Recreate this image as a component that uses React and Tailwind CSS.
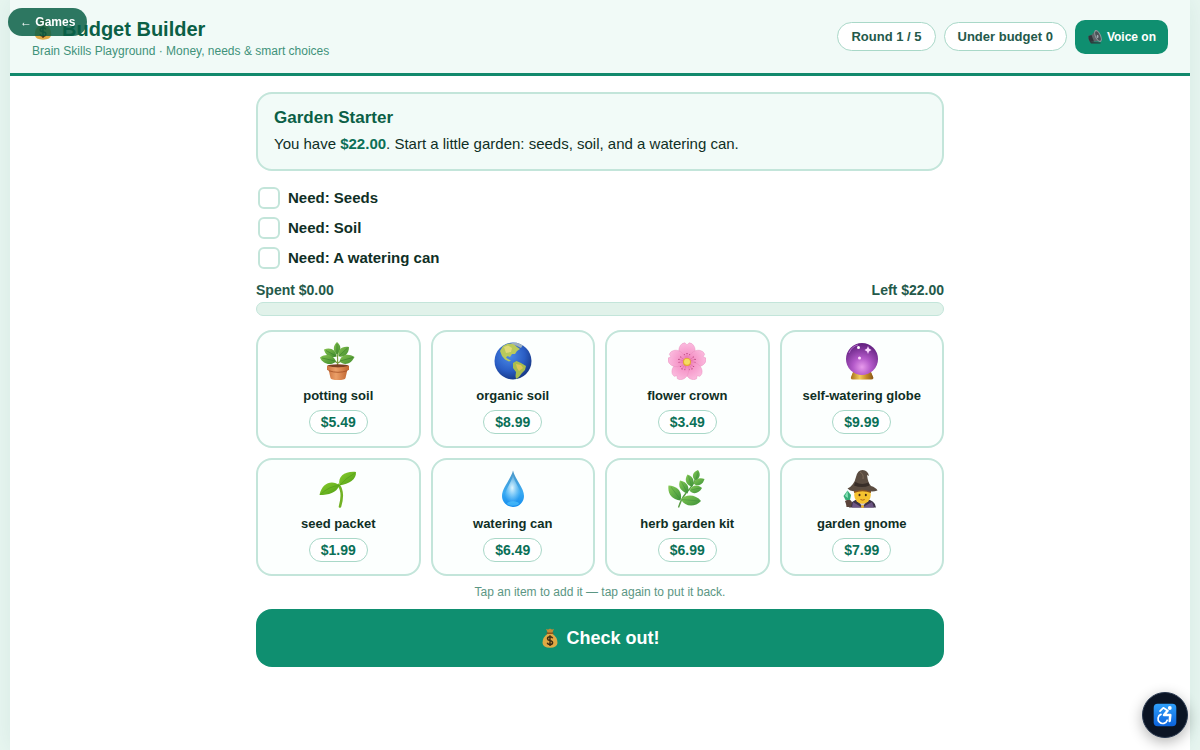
import React, { useState } from "react";

const BUDGET = 22;

const NEEDS = [
  { id: "seeds", label: "Seeds", items: ["seed"] },
  { id: "soil", label: "Soil", items: ["potting", "organic"] },
  { id: "can", label: "A watering can", items: ["can"] },
];

const ITEMS = [
  { id: "potting", name: "potting soil", price: 5.49, Icon: PlantIcon },
  { id: "organic", name: "organic soil", price: 8.99, Icon: GlobeIcon },
  { id: "crown", name: "flower crown", price: 3.49, Icon: BlossomIcon },
  { id: "orb", name: "self-watering globe", price: 9.99, Icon: OrbIcon },
  { id: "seed", name: "seed packet", price: 1.99, Icon: SproutIcon },
  { id: "can", name: "watering can", price: 6.49, Icon: DropIcon },
  { id: "herb", name: "herb garden kit", price: 6.99, Icon: HerbIcon },
  { id: "gnome", name: "garden gnome", price: 7.99, Icon: MageIcon },
];

const money = (n) => `$${n.toFixed(2)}`;

function PlantIcon() {
  return (
    <svg viewBox="0 0 38 38" className="size-[38px]" aria-hidden="true">
      <defs>
        <linearGradient id="pot" x1="0" x2="1">
          <stop offset="0" stopColor="#cc7440" />
          <stop offset=".4" stopColor="#eb9f68" />
          <stop offset="1" stopColor="#c0652f" />
        </linearGradient>
        <linearGradient id="leafA" x1="0" y1="0" x2="1" y2="1">
          <stop offset="0" stopColor="#86c250" />
          <stop offset="1" stopColor="#3f8c2d" />
        </linearGradient>
      </defs>
      <path d="M18.500 24 C19 18 18.500 13 18 9 M18.500 21 C15 18 12 17 10 16.500 M19 21 C22 19 25 17 27 16" fill="none" stroke="#7a9a3e" strokeWidth="1.200" />
      <g fill="url(#leafA)">
        <path d="M18 12.500 C13.500 9 14 3.500 18 0 C22.500 3.500 22.500 9 18 12.500Z" />
        <path d="M17.500 14.500 C11 16.500 6 13 5 7.500 C11.500 5 17 8 17.500 14.500Z" />
        <path d="M19.500 14.500 C18 8 23 3.500 30 5 C30 11.500 26 15.500 19.500 14.500Z" />
        <path d="M17 19.500 C11 24.500 3.500 21.500 1 15.500 C7.500 11 14.500 13 17 19.500Z" />
        <path d="M20.500 19.500 C22 12.500 29 11 35.500 15 C32 22 25.500 24 20.500 19.500Z" />
      </g>
      <path d="M17 14 L7 8.500 M20 14 L28.500 6 M16 19 L3 16 M21 19 L34 15.500 M18 12 V2" stroke="#2f7525" strokeWidth=".5" />
      <path d="M9 25 H29 L26.500 36 Q26 38 19 38 Q12 38 11.500 36Z" fill="url(#pot)" />
      <ellipse cx="19" cy="24" rx="10.800" ry="1.800" fill="#7b4023" />
      <path d="M8 23.800 Q19 27.200 30 23.800 V28 Q19 31.500 8 28Z" fill="url(#pot)" />
      <path d="M9.500 28.600 Q19 32 28.500 28.600" fill="none" stroke="#a34f24" strokeWidth=".8" />
    </svg>
  );
}

function GlobeIcon() {
  return (
    <svg viewBox="0 0 38 38" className="size-[38px]" aria-hidden="true">
      <defs>
        <radialGradient id="sea" cx=".4" cy=".35" r=".7">
          <stop offset="0" stopColor="#4c8ce8" />
          <stop offset=".6" stopColor="#2a5dc4" />
          <stop offset="1" stopColor="#15347f" />
        </radialGradient>
        <clipPath id="world">
          <circle cx="19" cy="19" r="18.500" />
        </clipPath>
      </defs>
      <circle cx="19" cy="19" r="18.500" fill="url(#sea)" />
      <g clipPath="url(#world)">
        <path d="M6 9 L9 4 L14 1.500 L20 2 L23 5 L26 7 L23 9 L21 12 L18 12 L16 15 L13.500 14 L12 15.500 L14 17 L17 18.500 L15 19.500 L11 17.500 L8 14Z" fill="#b9c95b" />
        <path d="M10 5 L14 3.500 L18 6 L17 10 L12 11Z" fill="#dfda78" />
        <path d="M16 1 L25 0 L29 3 L27 6 L23 4Z" fill="#9fb0bd" />
        <path d="M19 21 L22.500 19 L27 21 L32 24 L31 28 L28 31 L25 35 L22 37 L21.500 34 L22 30 L19 26Z" fill="#a9bd4f" />
        <path d="M22 22 L27 23 L29 26 L25 29 L23 26Z" fill="#dfc757" />
      </g>
    </svg>
  );
}

function BlossomIcon() {
  return (
    <svg viewBox="0 0 38 38" className="size-[38px]" aria-hidden="true">
      <defs>
        <radialGradient id="petal" gradientUnits="userSpaceOnUse" cx="19" cy="20" r="19">
          <stop offset="0" stopColor="#e86daa" />
          <stop offset=".4" stopColor="#f596c8" />
          <stop offset="1" stopColor="#fbbade" />
        </radialGradient>
      </defs>
      {[0, 72, 144, 216, 288].map((angle) => (
        <g key={angle} transform={`rotate(${angle} 19 20)`}>
          <path d="M19 20 C12 16 9 9 12 4 Q13.500 1 17 .8 L19 3 L21 .8 Q24.500 1 26 4 C29 9 26 16 19 20Z" fill="url(#petal)" stroke="#e78aba" strokeWidth=".4" />
          <path d="M19 18 V12 M18 17 L16.500 13 M20 17 L21.500 13" stroke="#d65b9b" strokeWidth=".4" />
          <circle cx="19" cy="11.500" r=".6" fill="#a62a62" />
          <circle cx="16.200" cy="12.500" r=".5" fill="#a62a62" />
          <circle cx="21.800" cy="12.500" r=".5" fill="#a62a62" />
        </g>
      ))}
      <circle cx="19" cy="20" r="4" fill="#e6a92f" />
      <circle cx="19" cy="19.700" r="3" fill="#f5dc62" />
    </svg>
  );
}

function OrbIcon() {
  return (
    <svg viewBox="0 0 38 38" className="size-[38px]" aria-hidden="true">
      <defs>
        <radialGradient id="orb" cx=".5" cy=".75" r=".7">
          <stop offset="0" stopColor="#e79aec" />
          <stop offset=".4" stopColor="#b359c9" />
          <stop offset="1" stopColor="#662383" />
        </radialGradient>
        <linearGradient id="gold" x1="0" x2="1">
          <stop offset="0" stopColor="#a8701b" />
          <stop offset=".4" stopColor="#f1cc5b" />
          <stop offset=".7" stopColor="#c58c28" />
          <stop offset="1" stopColor="#8c5916" />
        </linearGradient>
      </defs>
      <path d="M10 30 H28 L30.500 36 Q30 37.500 28 37.500 H10 Q8 37.500 7.800 36Z" fill="url(#gold)" />
      <circle cx="19" cy="17" r="16" fill="url(#orb)" />
      <path d="M9.500 31.500 Q19 35 28.500 31.500 L30 36 Q19 38.500 8 36Z" fill="url(#gold)" />
      <path d="M25 4 L26 6.500 L28.500 8 L26 9.500 L25 12 L24 9.500 L21.500 8 L24 6.500Z" fill="#fbd8ff" />
      <circle cx="15.500" cy="5.500" r="1.500" fill="#fff" />
      <circle cx="16.500" cy="16" r="1.500" fill="#ffd9ff" />
      <path d="M6 11 Q9 4 15 3" fill="none" stroke="#c57cd8" strokeWidth=".8" />
    </svg>
  );
}

function SproutIcon() {
  return (
    <svg viewBox="0 0 38 38" className="size-[38px]" aria-hidden="true">
      <defs>
        <linearGradient id="sprout" x1="0" y1="0" x2="1" y2="1">
          <stop offset="0" stopColor="#8ccf2e" />
          <stop offset="1" stopColor="#4c9c14" />
        </linearGradient>
      </defs>
      <path d="M19.500 15 C23.500 20 23.500 28 21 36.500" fill="none" stroke="#72b224" strokeWidth="2.600" strokeLinecap="round" />
      <path d="M20.500 15.500 C18.500 6 26 1 37 2 C37.500 9.500 30 14 20.500 15.500Z" fill="url(#sprout)" />
      <path d="M20.500 15.500 C14 9.500 3 12 .5 25 C10 25 17 23 20.500 15.500Z" fill="url(#sprout)" />
      <path d="M20.500 15.500 Q27 8 36 3 M20.500 15.500 Q10 16 1.500 24.500" fill="none" stroke="#4b9318" strokeWidth=".5" />
    </svg>
  );
}

function DropIcon() {
  return (
    <svg viewBox="0 0 38 38" className="size-[38px]" aria-hidden="true">
      <defs>
        <linearGradient id="drop" x1="0" y1="0" x2="0" y2="1">
          <stop offset="0" stopColor="#4d96c4" />
          <stop offset=".6" stopColor="#39aaf2" />
          <stop offset="1" stopColor="#128bed" />
        </linearGradient>
        <radialGradient id="dropLight" cx=".45" cy=".45" r=".55">
          <stop offset="0" stopColor="#dff6ff" />
          <stop offset="1" stopColor="#9bdcff" stopOpacity="0" />
        </radialGradient>
      </defs>
      <path d="M19 .5 C21 9 30 18 30 26 A11 11 0 0 1 8 26 C8 18 17 9 19 .5Z" fill="url(#drop)" />
      <path d="M19 5 C20 12 27 19 27 25.500 A8 8 0 0 1 11 25.500 C11 19 18 12 19 5Z" fill="url(#dropLight)" />
      <ellipse cx="19" cy="33.500" rx="6" ry="2.200" fill="#62d2ff" opacity=".5" />
    </svg>
  );
}

function HerbIcon() {
  return (
    <svg viewBox="0 0 38 38" className="size-[38px]" aria-hidden="true">
      <defs>
        <linearGradient id="herb" x1="0" y1="0" x2="1" y2="1">
          <stop offset="0" stopColor="#86cb55" />
          <stop offset="1" stopColor="#3c9139" />
        </linearGradient>
      </defs>
      <path d="M10.500 37.500 Q13 29 18 23 Q25 16 28 8" fill="none" stroke="#599c45" strokeWidth="1.300" />
      <g fill="url(#herb)">
        <path d="M27.500 10.500 C23 7 24.500 2 30 0 C33 4 32 8.500 27.500 10.500Z" />
        <path d="M24 17 C17 14 16.500 9 19.500 4.500 C26 7 27 12 24 17Z" />
        <path d="M19.500 23.500 C11.500 21 10 15.500 12 10.500 C19.500 12 22 17.500 19.500 23.500Z" />
        <path d="M12.500 30.500 C3 29 -.5 23 .5 15.500 C9.500 16 15 22 12.500 30.500Z" />
        <path d="M25.500 13.500 C27 8.500 32 7 36.500 9 C35 14.500 30 17.500 25.500 13.500Z" />
        <path d="M21.500 20.500 C24 14.500 30 14 34 18 C31 23.500 25 25 21.500 20.500Z" />
        <path d="M13 29.500 C18 23.500 28 24.500 33 31 C27 37.500 17 37 13 29.500Z" />
      </g>
      <path d="M12 29 L3 17 M19 22 L13.500 12 M14 29.500 L31 31 M23 20 L32 18 M23.500 15.500 L20.500 6 M28 10 L30 2" stroke="#37833a" strokeWidth=".4" />
    </svg>
  );
}

function MageIcon() {
  return (
    <svg viewBox="0 0 38 38" className="size-[38px]" aria-hidden="true">
      <path d="M6 37.500 Q8 30 16 29 H23 Q32 30 33 37.500Z" fill="#3d3346" />
      <path d="M10 32 L19 37.500 L29 32 L31 37.500 H9Z" fill="#6c5583" />
      <path d="M15 30 L19.500 37.500 L24 30Z" fill="#cfc8d3" />
      <circle cx="19.500" cy="36.500" r="1.500" fill="#e9b52e" />
      <ellipse cx="19.500" cy="25" rx="8.300" ry="8.700" fill="#f6c32f" />
      <path d="M11 21 Q19.500 17 28 21 V23 Q19.500 19.500 11 23Z" fill="#8c5520" />
      <ellipse cx="16.500" cy="25" rx="1" ry="1.200" fill="#4a2c16" />
      <ellipse cx="22.800" cy="25" rx="1" ry="1.200" fill="#4a2c16" />
      <path d="M17.500 29.500 Q19.600 30.800 21.700 29.500" fill="none" stroke="#a75a16" strokeWidth=".9" />
      <path d="M4.500 18.500 Q11 15.500 13 7 Q14.500 0 19.500 0 Q25 .5 26 6 L24 5 Q25 13 28 16 Q33 17.500 34.500 20.500 Q29 22.500 24 20.500 Q19.500 19 14.500 20.500 Q8 22.500 4.500 18.500Z" fill="#5b4d41" />
      <path d="M12.200 12 Q19 15.500 25.500 12.500 L26.500 15.500 Q19 18.500 11 15.500Z" fill="#382e28" />
      <path d="M17 2 Q21 4 20 9" fill="none" stroke="#806d5a" strokeWidth=".9" />
      <path d="M4.500 37 L5 29" stroke="#5d4030" strokeWidth="2" />
      <path d="M2 31 Q7 28 9 32 L8 37 H4Z" fill="#5a433a" />
      <path d="M4.500 20.500 L8 25 L7 30 H2.500 L.5 26Z" fill="#35ac77" />
      <path d="M4.500 20.500 L5 28 L2 26Z" fill="#86e2b5" />
    </svg>
  );
}

function MoneyBagIcon({ className }) {
  return (
    <svg viewBox="0 0 20 20" className={className} aria-hidden="true">
      <path d="M6 .8 Q8 2.200 10 .5 Q12 2.200 14 .8 L12 5.500 H8Z" fill="#c58a35" />
      <path d="M8 5.500 H12 Q17.500 9 17.500 15 Q17 19.700 10 19.700 Q3 19.700 2.500 15 Q2.500 9 8 5.500Z" fill="#e0a944" />
      <path d="M7 5.300 H13" stroke="#89561d" strokeWidth="1.400" strokeLinecap="round" />
      <path d="M12.700 10.300 Q12 8.800 10 8.800 Q7.500 8.900 7.500 10.800 Q7.600 12.300 10 12.600 Q12.700 13 12.600 14.800 Q12.400 16.500 10 16.500 Q7.800 16.500 7.200 14.800 M10 7.300 V18" fill="none" stroke="#3d2911" strokeWidth="1.400" />
    </svg>
  );
}

function SpeakerIcon() {
  return (
    <svg viewBox="0 0 16 16" className="size-4" aria-hidden="true">
      <path d="M1.500 7 L4.500 6 L9 1 L14.500 12 L8 12.500 L3 13 Q1 10 1.500 7Z" fill="#5d6569" />
      <path d="M1.500 7 L4.500 6 L7 12.500 L3 13 Q1 10 1.500 7Z" fill="#30363a" />
      <ellipse cx="11" cy="7" rx="3" ry="6.500" transform="rotate(-24 11 7)" fill="#8e989c" />
      <ellipse cx="11" cy="7" rx="2" ry="5.200" transform="rotate(-24 11 7)" fill="#4b5357" />
      <ellipse cx="10.600" cy="7.500" rx=".9" ry="1.800" fill="#a2adb2" />
      <path d="M3 13 L13.500 13.500 V14.500 H4Z" fill="#30363a" />
    </svg>
  );
}

function WheelchairIcon() {
  return (
    <svg viewBox="0 0 24 24" className="size-6" aria-hidden="true">
      <defs>
        <linearGradient id="sign" x1="0" y1="0" x2="0" y2="1">
          <stop offset="0" stopColor="#2fa0fb" />
          <stop offset="1" stopColor="#0b62dc" />
        </linearGradient>
      </defs>
      <rect x=".7" y=".7" width="22.600" height="22.600" rx="4" fill="url(#sign)" />
      <circle cx="16.800" cy="5" r="1.900" fill="#fff" />
      <path d="M7 8.200 L10.300 4.800 L14.800 7.800" fill="none" stroke="#fff" strokeWidth="1.700" strokeLinecap="round" strokeLinejoin="round" />
      <path d="M14.300 8 L11 12 H17.300 L16.700 18" fill="none" stroke="#fff" strokeWidth="2.500" strokeLinecap="round" strokeLinejoin="round" />
      <path d="M8 11.400 A4.700 4.700 0 1 0 14.200 17.200" fill="none" stroke="#fff" strokeWidth="1.700" strokeLinecap="round" />
    </svg>
  );
}

export default function App() {
  const [cart, setCart] = useState([]);
  const [voice, setVoice] = useState(true);

  const spent = ITEMS.filter((i) => cart.includes(i.id)).reduce((sum, i) => sum + i.price, 0);
  const toggle = (id) =>
    setCart((prev) => (prev.includes(id) ? prev.filter((x) => x !== id) : [...prev, id]));

  return (
    <div className="min-h-screen bg-[#e8f6f1] px-[10px] font-['Liberation_Sans',Arial,sans-serif] text-[#0f2f25]">
      <a
        href="#games"
        className="fixed top-2 left-2 z-10 flex h-7 items-center rounded-full bg-[#0b5f46]/85 px-3 text-xs font-bold text-white"
      >
        ← Games
      </a>

      <div className="mx-auto min-h-screen max-w-[1180px] bg-white shadow-[0_0_24px_rgba(15,95,70,0.08)]">
        <header className="flex items-center justify-between border-b-3 border-[#12896c] bg-[#f1faf7] px-[22px] py-[14px]">
          <div>
            <h1 className="flex items-center gap-2 text-xl leading-[30px] font-bold text-[#0b5f46]">
              <MoneyBagIcon className="size-[22px]" />
              Budget Builder
            </h1>
            <p className="text-xs leading-[15px] text-[#3f927a]">Brain Skills Playground · Money, needs &amp; smart choices</p>
          </div>
          <div className="flex items-center gap-2 text-[13px] font-bold text-[#24594a]">
            <span className="rounded-full border border-[#a9d8c8] bg-white px-[13px] leading-[27px]">Round 1 / 5</span>
            <span className="rounded-full border border-[#a9d8c8] bg-white px-[13px] leading-[27px]">Under budget 0</span>
            <button
              type="button"
              onClick={() => setVoice(!voice)}
              className="flex h-[34px] items-center gap-1 rounded-[10px] bg-[#0f8f70] px-3 text-xs font-bold text-white"
            >
              <SpeakerIcon />
              {voice ? "Voice on" : "Voice off"}
            </button>
          </div>
        </header>

        <main className="mx-auto max-w-[720px] px-4 pt-4 pb-8">
          <section className="rounded-2xl border-2 border-[#c3e5da] bg-[#f2fbf8] px-4 py-3">
            <h2 className="text-[17px] leading-6 font-bold text-[#0b5f46]">Garden Starter</h2>
            <p className="text-[15px] leading-[27px]">
              You have <strong className="text-[#0b7057]">{money(BUDGET)}</strong>. Start a little garden: seeds, soil, and a watering can.
            </p>
          </section>

          <ul className="flex flex-col gap-2 px-[2px] pt-4 text-[15px] font-bold">
            {NEEDS.map((need) => (
              <li key={need.id}>
                <label className="flex items-center gap-2 leading-[22px]">
                  <input
                    type="checkbox"
                    readOnly
                    checked={need.items.some((id) => cart.includes(id))}
                    className="size-[22px] appearance-none rounded-md border-2 border-[#c3e5da] bg-white checked:bg-[#0f8f70]"
                  />
                  Need: {need.label}
                </label>
              </li>
            ))}
          </ul>

          <div className="flex justify-between pt-3 text-sm leading-[18px] font-bold text-[#24594a]">
            <span>Spent {money(spent)}</span>
            <span>Left {money(BUDGET - spent)}</span>
          </div>
          <div className="mt-[3px] h-[14px] overflow-hidden rounded-full border border-[#c3e5da] bg-[#e1f2ea]">
            <div className="h-full bg-[#0f8f70]" style={{ width: `${Math.min(100, (spent / BUDGET) * 100)}%` }} />
          </div>

          <div className="grid grid-cols-2 gap-[10px] pt-[14px] sm:grid-cols-4">
            {ITEMS.map(({ id, name, price, Icon }) => (
              <button
                key={id}
                type="button"
                aria-pressed={cart.includes(id)}
                onClick={() => toggle(id)}
                className="flex flex-col items-center rounded-2xl border-2 border-[#c3e5da] bg-[#fcfffe] px-1 pt-[10px] pb-3 aria-pressed:border-[#0f8f70]"
              >
                <Icon />
                <span className="pt-[7px] pb-[5px] text-[13px] leading-[18px] font-bold">{name}</span>
                <span className="rounded-full border border-[#a9d8c8] bg-white px-[11px] text-sm leading-[22px] font-bold text-[#0b7057]">
                  {money(price)}
                </span>
              </button>
            ))}
          </div>

          <p className="pt-2 pb-[9px] text-center text-xs leading-4 text-[#5b9683]">Tap an item to add it — tap again to put it back.</p>
          <button
            type="button"
            className="flex h-[58px] w-full items-center justify-center gap-[6px] rounded-2xl bg-[#0f8f70] text-lg font-bold text-white"
          >
            <MoneyBagIcon className="size-5" />
            Check out!
          </button>
        </main>
      </div>

      <button
        type="button"
        aria-label="Accessibility options"
        className="fixed right-3 bottom-3 flex size-[46px] items-center justify-center rounded-full border border-[#26354c] bg-[#0b1424] shadow-[0_4px_14px_rgba(0,0,0,0.3)]"
      >
        <WheelchairIcon />
      </button>
    </div>
  );
}
